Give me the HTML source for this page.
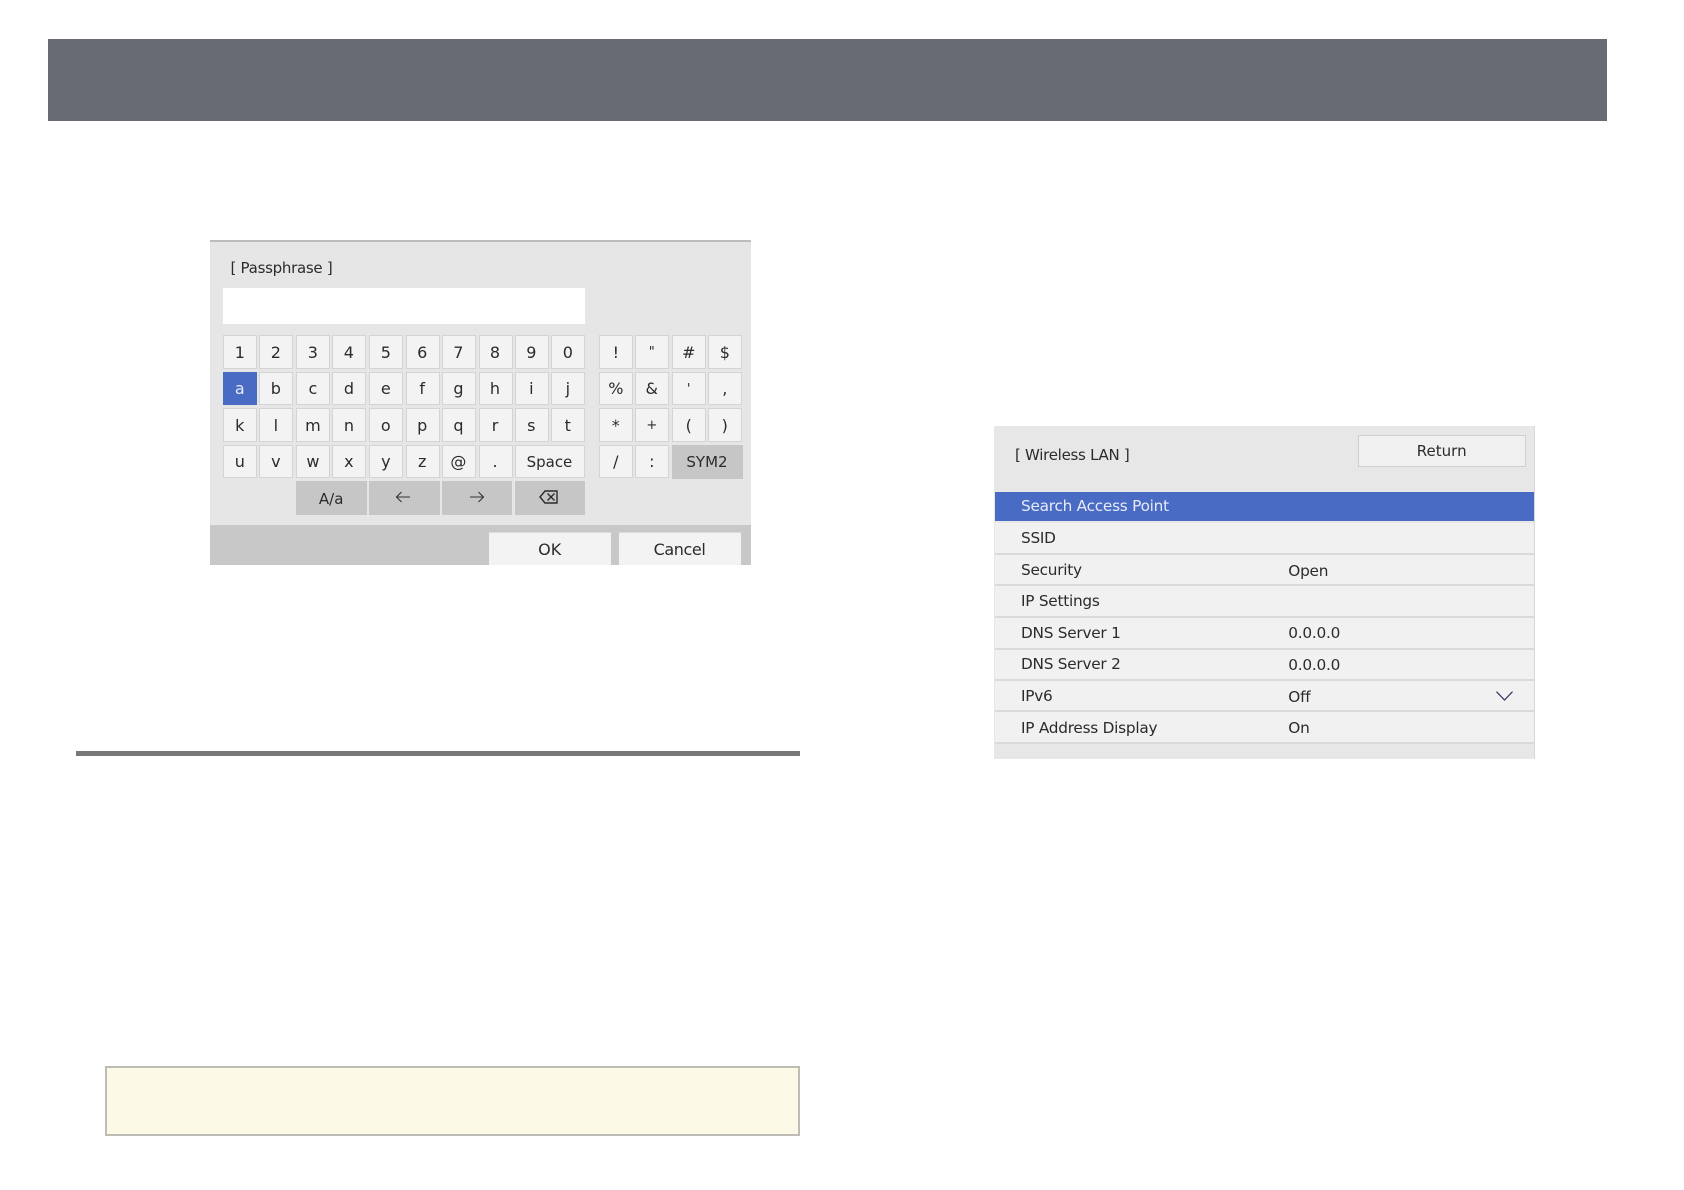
<!DOCTYPE html>
<html lang="en">
<head>
<meta charset="utf-8">
<title>Wireless LAN settings</title>
<style>
html,body{margin:0;padding:0;background:#fff}
body{position:relative;width:1684px;height:1190px;overflow:hidden;font-family:"DejaVu Sans","Liberation Sans",sans-serif;color:#2b2b2b}
div{position:absolute;box-sizing:border-box}
.t{white-space:nowrap;font-size:15px;line-height:20px;letter-spacing:-.28px}
.m{font-size:15.3px;letter-spacing:-.25px}
.k{width:34px;height:33.6px;background:#f3f3f3;border:1px solid #d4d4d4;display:flex;align-items:center;justify-content:center;font-size:16px;line-height:1;padding:2px 1px 0 0}
.w{font-size:15px}
.d{background:#c6c6c6;border:0;width:70.6px;height:34px;font-size:15px}
.r0{top:335.2px}.r1{top:371.6px}.r2{top:408.2px}.r3{top:444.5px}.r4{top:480.8px}
.c0{left:223.3px}.c1{left:259.3px}.c2{left:296.4px}.c3{left:332.4px}.c4{left:369.3px}.c5{left:405.7px}.c6{left:441.9px}.c7{left:478.5px}.c8{left:514.8px}.c9{left:551.3px}
.s0{left:599.3px}.s1{left:635.3px}.s2{left:672.2px}.s3{left:708.3px}
.row{left:994.6px;width:539.2px;background:#f1f1f1;border-bottom:2px solid #dadada}
svg{display:block}
</style>
</head>
<body>
<div style="left:48.4px;top:39px;width:1558.3px;height:82px;background:#686b73"></div>

<!-- Passphrase keyboard -->
<div style="left:210px;top:240px;width:541px;height:325px;background:#e6e6e6;border-top:2px solid #bcbcbc"></div>
<div style="left:210px;top:525px;width:541px;height:40px;background:#c8c8c8"></div>
<div class="t" style="left:230.5px;top:258px">[ Passphrase ]</div>
<div style="left:223.3px;top:288px;width:361.5px;height:36px;background:#fff"></div>

<div class="k r0 c0">1</div><div class="k r0 c1">2</div><div class="k r0 c2">3</div><div class="k r0 c3">4</div><div class="k r0 c4">5</div><div class="k r0 c5">6</div><div class="k r0 c6">7</div><div class="k r0 c7">8</div><div class="k r0 c8">9</div><div class="k r0 c9">0</div>
<div class="k r0 s0">!</div><div class="k r0 s1" style="font-size:13px">"</div><div class="k r0 s2">#</div><div class="k r0 s3">$</div>

<div class="k r1 c0" style="background:#4a6bc4;border-color:#4a6bc4;color:#e8edf8">a</div><div class="k r1 c1">b</div><div class="k r1 c2">c</div><div class="k r1 c3">d</div><div class="k r1 c4">e</div><div class="k r1 c5">f</div><div class="k r1 c6">g</div><div class="k r1 c7">h</div><div class="k r1 c8">i</div><div class="k r1 c9">j</div>
<div class="k r1 s0">%</div><div class="k r1 s1">&amp;</div><div class="k r1 s2" style="font-size:13px">'</div><div class="k r1 s3">,</div>

<div class="k r2 c0">k</div><div class="k r2 c1">l</div><div class="k r2 c2">m</div><div class="k r2 c3">n</div><div class="k r2 c4">o</div><div class="k r2 c5">p</div><div class="k r2 c6">q</div><div class="k r2 c7">r</div><div class="k r2 c8">s</div><div class="k r2 c9">t</div>
<div class="k r2 s0">*</div><div class="k r2 s1" style="font-size:13px">+</div><div class="k r2 s2">(</div><div class="k r2 s3">)</div>

<div class="k r3 c0">u</div><div class="k r3 c1">v</div><div class="k r3 c2">w</div><div class="k r3 c3">x</div><div class="k r3 c4">y</div><div class="k r3 c5">z</div><div class="k r3 c6">@</div><div class="k r3 c7">.</div><div class="k w r3 c8" style="width:70.3px">Space</div>
<div class="k r3 s0">/</div><div class="k r3 s1">:</div><div class="k d r3 s2">SYM2</div>

<div class="k d r4 c2" style="padding-top:3px">A/a</div>
<div class="k d r4 c4" style="padding:0 3px 2px 0"><svg width="16" height="12" viewBox="0 0 16 12" fill="none" stroke="#333" stroke-width="1.1"><path d="M15 6H1.5M6.5 1L1.5 6l5 5"/></svg></div>
<div class="k d r4 c6" style="padding:0 0 2px 0"><svg width="16" height="12" viewBox="0 0 16 12" fill="none" stroke="#333" stroke-width="1.1"><path d="M1 6h13.5M9.5 1l5 5-5 5"/></svg></div>
<div class="k d r4 c8" style="padding:0 3px 2px 0"><svg width="19" height="14" viewBox="0 0 19 14" fill="none" stroke="#2b2b2b" stroke-width="1.4"><path d="M6 1h12v12H6L1 7zM8.5 3.5l7 7M15.5 3.5l-7 7"/></svg></div>

<div class="k" style="left:489.3px;top:532.3px;width:121.7px;height:32.7px;border:0;border-top:1px solid #dcdcdc;font-size:16px">OK</div>
<div class="k" style="left:619px;top:532.3px;width:122px;height:32.7px;border:0;border-top:1px solid #dcdcdc;font-size:16px;letter-spacing:-.4px">Cancel</div>

<!-- Wireless LAN menu -->
<div style="left:994px;top:426px;width:541.3px;height:332.7px;background:#e7e7e7;border-right:1px solid #d8d8d8"></div>
<div class="t" style="left:1015px;top:444.5px">[ Wireless LAN ]</div>
<div class="k w" style="left:1357.7px;top:435px;width:168px;height:32.3px;background:#f0f0f0;border-color:#cfcfcf;padding:0">Return</div>

<div style="left:994.6px;top:492px;width:539.2px;height:29px;background:#4a6bc4"></div>
<div class="row" style="top:522.5px;height:32px"></div>
<div class="row" style="top:554.5px;height:31px"></div>
<div class="row" style="top:585.5px;height:32px"></div>
<div class="row" style="top:617.5px;height:32px"></div>
<div class="row" style="top:649.5px;height:31.5px"></div>
<div class="row" style="top:681px;height:31px"></div>
<div class="row" style="top:712px;height:32px"></div>

<div class="t m" style="left:1021px;top:496px;color:#e6ebf7">Search Access Point</div>
<div class="t m" style="left:1021px;top:527.5px">SSID</div>
<div class="t m" style="left:1021px;top:559.5px">Security</div>
<div class="t m" style="left:1021px;top:591px">IP Settings</div>
<div class="t m" style="left:1021px;top:623px">DNS Server 1</div>
<div class="t m" style="left:1021px;top:654px">DNS Server 2</div>
<div class="t m" style="left:1021px;top:686px">IPv6</div>
<div class="t m" style="left:1021px;top:718px">IP Address Display</div>

<div class="t m" style="left:1288.3px;top:561px">Open</div>
<div class="t m" style="left:1288.3px;top:623px">0.0.0.0</div>
<div class="t m" style="left:1288.3px;top:655px">0.0.0.0</div>
<div class="t m" style="left:1288.3px;top:687px">Off</div>
<div class="t m" style="left:1288.3px;top:718px">On</div>
<svg style="position:absolute;left:1496px;top:691px" width="17" height="10" viewBox="0 0 17 10" fill="none" stroke="#2f3560" stroke-width="1.2"><path d="M.5 .7L8.5 9l8-8.3"/></svg>

<!-- Section rule and note box -->
<div style="left:76px;top:751px;width:723.7px;height:5px;background:#787878"></div>
<div style="left:105px;top:1066px;width:694.7px;height:70px;background:#fdf9e7;border:2px solid #bdbdb6"></div>
</body>
</html>
